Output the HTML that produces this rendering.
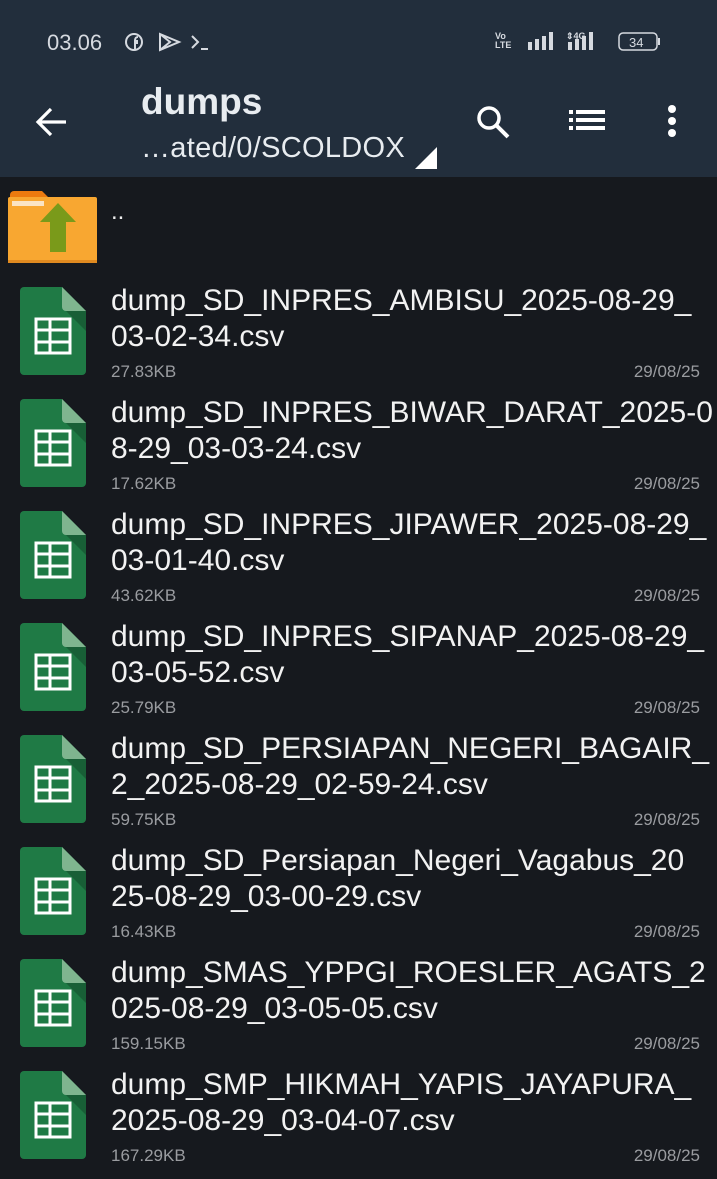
<!DOCTYPE html>
<html><head><meta charset="utf-8"><style>
*{margin:0;padding:0;box-sizing:border-box}
body{width:717px;height:1168px;background:#16191e;font-family:"Liberation Sans",sans-serif;position:relative;overflow:hidden;color:#fff}
.hdr{position:absolute;left:0;top:0;width:717px;height:177px;background:#222e3c}
.abs{position:absolute}
.row{position:absolute;left:0;width:717px;height:112px}
.name{position:absolute;left:111px;top:0;font-size:30px;line-height:36px;white-space:nowrap;letter-spacing:0px;color:#f2f2f2}
.sz{position:absolute;left:111px;top:79px;font-size:17px;color:#9a9ca0}
.dt{position:absolute;right:17px;top:79px;font-size:17px;color:#9a9ca0}
.ic{position:absolute;left:20px;top:4px}
</style></head><body>
<div class="hdr"></div>
<div class="abs" style="left:47px;top:30px;font-size:22px;color:#d6dae0">03.06</div>
<svg class="abs" style="left:122px;top:30px" width="100" height="24" viewBox="0 0 100 24">
<circle cx="12" cy="12" r="8" fill="none" stroke="#d6dae0" stroke-width="2"/>
<path d="M13 19V11h3M13 13h3M13 11c0-3 1-4 3-4" fill="none" stroke="#d6dae0" stroke-width="2"/>
<path d="M38 4L57 12 38 20Z M38 4l10 8-10 8" fill="none" stroke="#d6dae0" stroke-width="2"/>
<path d="M70 6l6 6-6 6M79 19h7" fill="none" stroke="#d6dae0" stroke-width="2"/>
</svg>
<div class="abs" style="left:495px;top:32px;font-size:9px;line-height:9px;font-weight:bold;color:#d6dae0">Vo<br>LTE</div>
<svg class="abs" style="left:528px;top:30px" width="140" height="24" viewBox="0 0 140 24">
<g fill="#d6dae0"><rect x="0" y="12" width="4" height="8"/><rect x="7" y="9" width="4" height="11"/><rect x="14" y="6" width="4" height="14"/><rect x="21" y="2" width="4" height="18"/>
<rect x="40" y="12" width="4" height="8"/><rect x="47" y="9" width="4" height="11"/><rect x="54" y="6" width="4" height="14"/><rect x="61" y="2" width="4" height="18"/></g>
<text x="38" y="9" font-size="9" font-weight="bold" fill="#d6dae0" font-family="Liberation Sans">⇕4G</text>
<rect x="91" y="3" width="38" height="17" rx="4" fill="none" stroke="#d6dae0" stroke-width="1.5"/>
<rect x="130" y="8" width="2" height="7" fill="#d6dae0"/>
<text x="101" y="17" font-size="13" fill="#d6dae0" font-family="Liberation Sans">34</text>
</svg>
<svg class="abs" style="left:34px;top:104px" width="36" height="36" viewBox="0 0 36 36"><path d="M32 18H4M17 5L4 18l13 13" fill="none" stroke="#fff" stroke-width="3.2"/></svg>
<div class="abs" style="left:141px;top:81px;font-size:37px;font-weight:bold;color:#e8ecf0">dumps</div>
<div class="abs" style="left:141px;top:132px;font-size:29px;color:#e8ecf0;letter-spacing:0.3px">…ated/0/SCOLDOX</div>
<svg class="abs" style="left:415px;top:147px" width="22" height="22"><path d="M22 0V22H0Z" fill="#fff"/></svg>
<svg class="abs" style="left:472px;top:102px" width="40" height="40" viewBox="0 0 40 40"><circle cx="17" cy="16" r="10" fill="none" stroke="#fff" stroke-width="3.5"/><path d="M24 23l12 12" stroke="#fff" stroke-width="4"/></svg>
<svg class="abs" style="left:569px;top:108px" width="40" height="26"><g fill="#fff"><rect x="0" y="2" width="4" height="4"/><rect x="7" y="2" width="29" height="4"/><rect x="0" y="10" width="4" height="4"/><rect x="7" y="10" width="29" height="4"/><rect x="0" y="18" width="4" height="4"/><rect x="7" y="18" width="29" height="4"/></g></svg>
<svg class="abs" style="left:665px;top:103px" width="16" height="36"><g fill="#fff"><circle cx="7" cy="6" r="4"/><circle cx="7" cy="18" r="4"/><circle cx="7" cy="30" r="4"/></g></svg>
<svg class="abs" style="left:8px;top:189px" width="90" height="74" viewBox="0 0 90 74">
<path d="M2 6a4 4 0 0 1 4-4h28l6 6H2Z" fill="#ec7a0f"/>
<rect x="0" y="8" width="89" height="66" rx="2" fill="#f8a731"/>
<rect x="0" y="71" width="89" height="3" fill="#e08a20"/>
<rect x="4" y="12" width="32" height="5" fill="#fbe4c4"/>
<path d="M50 14L68 33H58V63H42V33H32Z" fill="#7a9a1a"/>
</svg>
<div class="abs" style="left:111px;top:198px;font-size:24px;color:#eee">..</div>

<div id="list"></div>
<script>
var d=[["dump_SD_INPRES_AMBISU_2025-08-29_","03-02-34.csv","27.83KB"],
["dump_SD_INPRES_BIWAR_DARAT_2025-0","8-29_03-03-24.csv","17.62KB"],
["dump_SD_INPRES_JIPAWER_2025-08-29_","03-01-40.csv","43.62KB"],
["dump_SD_INPRES_SIPANAP_2025-08-29_","03-05-52.csv","25.79KB"],
["dump_SD_PERSIAPAN_NEGERI_BAGAIR_","2_2025-08-29_02-59-24.csv","59.75KB"],
["dump_SD_Persiapan_Negeri_Vagabus_20","25-08-29_03-00-29.csv","16.43KB"],
["dump_SMAS_YPPGI_ROESLER_AGATS_2","025-08-29_03-05-05.csv","159.15KB"],
["dump_SMP_HIKMAH_YAPIS_JAYAPURA_","2025-08-29_03-04-07.csv","167.29KB"]];
var ic='<svg class="ic" width="66" height="88" viewBox="0 0 66 88"><path d="M4 0H42L66 24V84a4 4 0 0 1-4 4H4a4 4 0 0 1-4-4V4a4 4 0 0 1 4-4Z" fill="#1f7a45"/><path d="M42 0V20a4 4 0 0 0 4 4H66Z" fill="#7fb58f"/><path d="M46 24H66V44Z" fill="#185f36"/><g fill="none" stroke="#fff" stroke-width="3"><rect x="16" y="32" width="34" height="34"/><path d="M16 43H50M16 55H50M30 32V66"/></g></svg>';
var h='';d.forEach(function(r,i){h+='<div class="row" style="top:'+(283+112*i)+'px">'+ic+'<div class="name">'+r[0]+'<br>'+r[1]+'</div><div class="sz">'+r[2]+'</div><div class="dt">29/08/25</div></div>';});
document.getElementById('list').innerHTML=h;
</script>
</body></html>
